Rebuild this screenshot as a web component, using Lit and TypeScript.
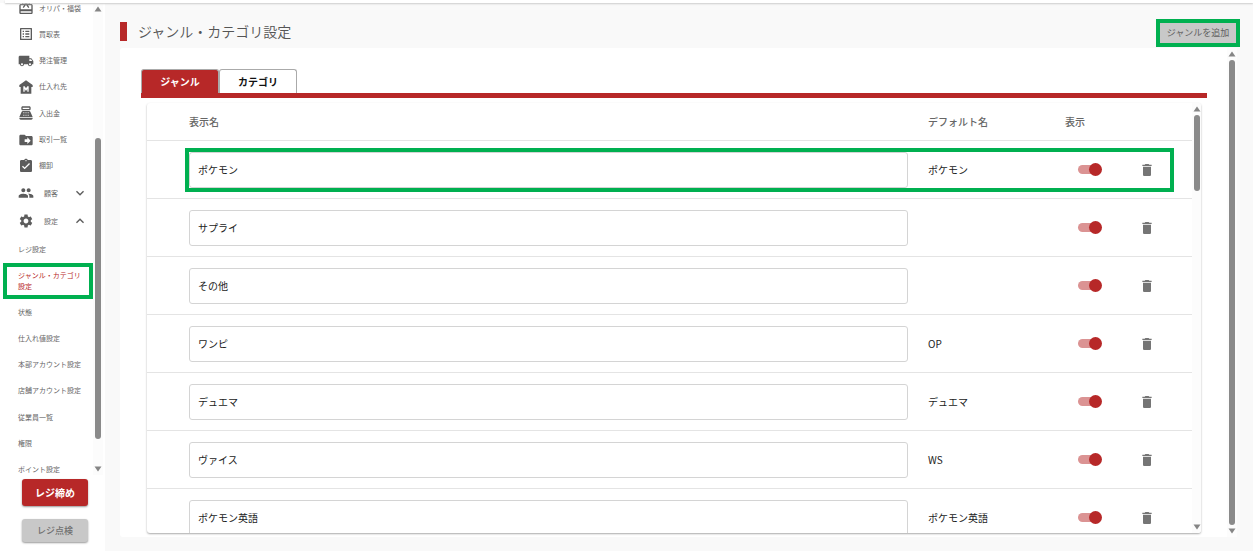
import { LitElement, html, css, svg, nothing } from "lit";
import { customElement, property, state } from "lit/decorators.js";
import { classMap } from "lit/directives/class-map.js";

const ICONS: Record<string, string> = {
  gift: "M20 6h-2.18c.11-.31.18-.65.18-1 0-1.66-1.34-3-3-3-1.05 0-1.96.54-2.5 1.35l-.5.67-.5-.68C10.96 2.54 10.05 2 9 2 7.34 2 6 3.34 6 5c0 .35.07.69.18 1H4c-1.11 0-1.99.89-1.99 2L2 19c0 1.11.89 2 2 2h16c1.11 0 2-.89 2-2V8c0-1.11-.89-2-2-2zm-5-2c.55 0 1 .45 1 1s-.45 1-1 1-1-.45-1-1 .45-1 1-1zM9 4c.55 0 1 .45 1 1s-.45 1-1 1-1-.45-1-1 .45-1 1-1zm11 15H4v-2h16v2zm0-5H4V8h5.08L7 10.83 8.62 12 11 8.76l1-1.36 1 1.36L15.38 12 17 10.83 14.92 8H20v6z",
  list: "M19 5v14H5V5h14m1.1-2H3.9c-.5 0-.9.4-.9.9v16.2c0 .4.4.9.9.9h16.2c.4 0 .9-.5.9-.9V3.9c0-.5-.5-.9-.9-.9zM11 7h6v2h-6V7zm0 4h6v2h-6v-2zm0 4h6v2h-6zM7 7h2v2H7zm0 4h2v2H7zm0 4h2v2H7z",
  truck: "M20 8h-3V4H3c-1.1 0-2 .9-2 2v11h2c0 1.66 1.34 3 3 3s3-1.34 3-3h6c0 1.66 1.34 3 3 3s3-1.34 3-3h2v-5l-3-4zM6 18.5c-.83 0-1.5-.67-1.5-1.5s.67-1.5 1.5-1.5 1.5.67 1.5 1.5-.67 1.5-1.5 1.5zm13.5-9l1.96 2.5H17V9.5h2.5zm-1.5 9c-.83 0-1.5-.67-1.5-1.5s.67-1.5 1.5-1.5 1.5.67 1.5 1.5-.67 1.5-1.5 1.5z",
  museum: "M12 2 2 9v3h2v10h16V12h2V9zM8 19v-8h2l2 3 2-3h2v8h-2v-4l-2 3-2-3v4z",
  register: "M17 2H7c-1.1 0-2 .9-2 2v2c0 1.1.9 2 2 2h10c1.1 0 2-.9 2-2V4c0-1.1-.9-2-2-2zm0 4H7V4h10v2zm3 16H4c-1.1 0-2-.9-2-2v-1h20v1c0 1.1-.9 2-2 2zM18.53 10.19C18.21 9.47 17.49 9 16.7 9H7.3c-.79 0-1.51.47-1.83 1.19L2 18h20l-3.47-7.81zM9.5 16H8v-1h1.5zm0-2H8v-1h1.5zm0-2H8v-1h1.5zm3.2 4h-1.4v-1h1.4zm0-2h-1.4v-1h1.4zm0-2h-1.4v-1h1.4zm3.3 4h-1.5v-1H16zm0-2h-1.5v-1H16zm0-2h-1.5v-1H16z",
  folder: "M20 6h-8l-2-2H4c-1.1 0-2 .9-2 2v12c0 1.1.9 2 2 2h16c1.1 0 2-.9 2-2V8c0-1.1-.9-2-2-2zm-6 12v-3h-4v-4h4V8l5 5-5 5z",
  check: "M19 3h-4.18C14.4 1.84 13.3 1 12 1c-1.3 0-2.4.84-2.82 2H5c-1.1 0-2 .9-2 2v14c0 1.1.9 2 2 2h14c1.1 0 2-.9 2-2V5c0-1.1-.9-2-2-2zm-7 0c.55 0 1 .45 1 1s-.45 1-1 1-1-.45-1-1 .45-1 1-1zm-2 14l-4-4 1.41-1.41L10 14.17l6.59-6.59L18 9l-8 8z",
  people: "M16 11c1.66 0 2.99-1.34 2.99-3S17.66 5 16 5c-1.66 0-3 1.34-3 3s1.34 3 3 3zm-8 0c1.66 0 2.99-1.34 2.99-3S9.66 5 8 5C6.34 5 5 6.34 5 8s1.34 3 3 3zm0 2c-2.33 0-7 1.17-7 3.5V19h14v-2.5c0-2.33-4.67-3.5-7-3.5zm8 0c-.29 0-.62.02-.97.05 1.16.84 1.97 1.97 1.97 3.45V19h6v-2.5c0-2.33-4.67-3.5-7-3.5z",
  gear: "M19.14 12.94c.04-.3.06-.61.06-.94 0-.32-.02-.64-.07-.94l2.03-1.58c.18-.14.23-.41.12-.61l-1.92-3.32c-.12-.22-.37-.29-.59-.22l-2.39.96c-.5-.38-1.03-.7-1.62-.94l-.36-2.54c-.04-.24-.24-.41-.48-.41h-3.84c-.24 0-.43.17-.47.41l-.36 2.54c-.59.24-1.13.57-1.62.94l-2.39-.96c-.22-.08-.47 0-.59.22L2.74 8.87c-.12.21-.08.47.12.61l2.03 1.58c-.05.3-.09.63-.09.94s.02.64.07.94l-2.03 1.58c-.18.14-.23.41-.12.61l1.92 3.32c.12.22.37.29.59.22l2.39-.96c.5.38 1.03.7 1.62.94l.36 2.54c.05.24.24.41.48.41h3.84c.24 0 .44-.17.47-.41l.36-2.54c.59-.24 1.13-.56 1.62-.94l2.39.96c.22.08.47 0 .59-.22l1.92-3.32c.12-.22.07-.47-.12-.61l-2.01-1.58zM12 15.6c-1.98 0-3.6-1.62-3.6-3.6s1.62-3.6 3.6-3.6 3.6 1.62 3.6 3.6-1.62 3.6-3.6 3.6z",
  down: "M16.59 8.59 12 13.17 7.41 8.59 6 10l6 6 6-6z",
  up: "m12 8-6 6 1.41 1.41L12 10.83l4.59 4.58L18 14z",
  trash: "M6 19c0 1.1.9 2 2 2h8c1.1 0 2-.9 2-2V7H6v12zM19 4h-3.5l-1-1h-5l-1 1H5v2h14V4z",
};

const icon = (name: string) =>
  html`<svg class="icon" viewBox="0 0 24 24" aria-hidden="true">${svg`<path fill-rule="evenodd" d=${ICONS[name]}></path>`}</svg>`;

/** Slim scroll bar: two arrows and a thumb placed by proportion. */
@customElement("scroll-bar")
class ScrollBar extends LitElement {
  @property({ type: Number }) before = 0;
  @property({ type: Number }) thumb = 1;
  @property({ type: Number }) after = 0;

  static styles = css`
    :host {
      display: flex;
      flex-direction: column;
      align-items: center;
      background: #fcfcfc;
    }
    svg {
      display: block;
      flex: none;
      width: 8px;
      height: 12px;
      fill: #858585;
    }
    .space {
      flex: 0 1 0px;
    }
    .thumb {
      flex: 1 1 0px;
      width: 6px;
      border-radius: 3px;
      background: #8a8a8a;
    }
  `;

  render() {
    return html`
      <svg viewBox="0 0 8 12"><path d="M4 3.5 7.5 8.5h-7z"></path></svg>
      <div class="space" style="flex-grow:${this.before}"></div>
      <div class="thumb" style="flex-grow:${this.thumb}"></div>
      <div class="space" style="flex-grow:${this.after}"></div>
      <svg viewBox="0 0 8 12"><path d="M4 8.5.5 3.5h7z"></path></svg>
    `;
  }
}

const MENU = [
  { icon: "gift", label: "オリパ・福袋" },
  { icon: "list", label: "買取表" },
  { icon: "truck", label: "発注管理" },
  { icon: "museum", label: "仕入れ先" },
  { icon: "register", label: "入出金" },
  { icon: "folder", label: "取引一覧" },
  { icon: "check", label: "棚卸" },
];

const SETTINGS = [
  "状態",
  "仕入れ値設定",
  "本部アカウント設定",
  "店舗アカウント設定",
  "従業員一覧",
  "権限",
  "ポイント設定",
];

const GENRES = [
  { name: "ポケモン", original: "ポケモン", marked: true },
  { name: "サプライ", original: "" },
  { name: "その他", original: "" },
  { name: "ワンピ", original: "OP" },
  { name: "デュエマ", original: "デュエマ" },
  { name: "ヴァイス", original: "WS" },
  { name: "ポケモン英語", original: "ポケモン英語" },
];

@customElement("app-root")
class AppRoot extends LitElement {
  @state() private tab = 0;

  static styles = css`
    :host {
      display: flex;
      flex-direction: column;
      height: 100vh;
      overflow: hidden;
      background: #f9f9f9;
      color: #222;
      font: 10px/16px "Noto Sans CJK JP", "Noto Sans", sans-serif;
    }
    * {
      box-sizing: border-box;
    }
    button,
    input {
      font: inherit;
      color: inherit;
    }
    button {
      border: 0;
      padding: 0;
      background: none;
      cursor: pointer;
    }
    a {
      color: inherit;
      text-decoration: none;
    }
    .icon {
      display: block;
      flex: none;
      width: 16px;
      height: 16px;
      fill: currentColor;
    }
    .topbar {
      flex: none;
      height: 3px;
      margin-left: 5px;
      background: #fff;
      box-shadow: 0 1px 2px #ccc;
      z-index: 1;
    }
    .body {
      flex: 1;
      display: flex;
      min-height: 0;
    }

    .sidebar {
      flex: none;
      display: flex;
      flex-direction: column;
      width: 105px;
      background: #fff;
      color: #666;
      font-size: 7px;
      line-height: 11px;
    }
    .sidebar .icon {
      fill: #5c5c5c;
    }
    .scroller {
      flex: 1;
      display: flex;
      min-height: 0;
    }
    .scroller scroll-bar {
      width: 10px;
    }
    nav {
      flex: none;
      width: 93px;
      overflow: hidden;
    }
    .group {
      display: flex;
      flex-direction: column;
      height: 184px;
    }
    .group.scrolled {
      margin-top: -8px;
    }
    .item {
      flex: 1;
      display: flex;
      align-items: center;
      padding-left: 18px;
    }
    .scrolled .item {
      gap: 5px;
    }
    .parent {
      display: flex;
      align-items: center;
      gap: 10px;
      width: 100%;
      height: 28px;
      padding: 0 5px 0 18px;
      text-align: left;
    }
    .parent span {
      flex: 1;
    }
    .single {
      height: 28px;
    }
    .current {
      position: relative;
      height: 36px;
      padding-right: 8px;
      color: #b72828;
    }
    .mark {
      position: absolute;
      border: 4px solid #00b050;
      pointer-events: none;
    }
    .current .mark {
      inset: 0 0 0 3px;
    }
    .actions {
      flex: none;
      display: flex;
      flex-direction: column;
      gap: 13px;
      padding: 4px 17px 9px 22px;
    }
    .filled {
      border-radius: 3px;
      background: #c8c8c8;
      box-shadow: 0 1px 2px #999;
      color: #707070;
      font-size: 9px;
      font-weight: 500;
      height: 23px;
    }
    .filled.primary {
      height: 27px;
      background: #b72828;
      color: #fff;
      font-size: 10px;
      font-weight: 700;
    }

    main {
      flex: 1;
      display: flex;
      flex-direction: column;
      min-width: 0;
      padding: 15px 16px 14px 15px;
    }
    .head {
      flex: none;
      display: flex;
      align-items: flex-start;
      height: 30px;
      margin-right: -3px;
    }
    .accent {
      width: 7px;
      height: 19px;
      margin: 4px 11px 0 0;
      background: #b72828;
    }
    h1 {
      flex: 1;
      margin: 3px 0 0;
      font-size: 14px;
      line-height: 20px;
      font-weight: 350;
      color: #555;
    }
    .add {
      width: 84px;
      height: 28px;
      margin-top: 1px;
      border: 4px solid #00b050;
      background: #c8c8c8;
      color: #606060;
      font-size: 9px;
      line-height: 18px;
      white-space: nowrap;
    }
    .panel {
      flex: 1;
      display: flex;
      min-height: 0;
      border-radius: 3px;
      background: #fff;
    }
    .panel > scroll-bar {
      width: 10px;
    }
    .content {
      flex: 1;
      display: flex;
      flex-direction: column;
      min-width: 0;
      padding: 21px 20px 4px 21px;
    }
    .tabs {
      flex: none;
      display: flex;
      border-bottom: 5px solid #b72828;
    }
    .tab {
      width: 78px;
      height: 24px;
      border: 1px solid #aaa;
      border-bottom: 0;
      border-radius: 3px 3px 0 0;
      color: #111;
      font-weight: 700;
    }
    .tab.on {
      background: #b72828;
      color: #fff;
    }
    .card {
      flex: 1;
      display: flex;
      min-height: 0;
      margin: 5px 6px 0;
      border-radius: 3px;
      overflow: hidden;
      box-shadow: 0 1px 2px #aaa;
    }
    .card scroll-bar {
      width: 9px;
    }
    .rows {
      flex: 1;
      min-width: 0;
      overflow: hidden;
    }
    table {
      width: 100%;
      table-layout: fixed;
      border-collapse: separate;
      border-spacing: 0;
    }
    .c-lead {
      width: 32px;
    }
    .c-default {
      width: 137px;
    }
    .c-show {
      width: 74px;
    }
    .c-delete {
      width: 63px;
    }
    th,
    td {
      padding: 0 10px;
      border-bottom: 1px solid #e4e4e4;
      text-align: left;
      font-weight: 400;
    }
    th {
      height: 38px;
      color: #666;
      font-weight: 500;
    }
    td {
      height: 58px;
    }
    tr {
      position: relative;
    }
    td .mark {
      top: 7px;
      right: 18px;
      left: 38px;
      height: 44px;
    }
    .name {
      display: block;
      width: 100%;
      height: 36px;
      padding: 0 8px;
      border: 1px solid #d4d4d4;
      border-radius: 3px;
      background: #fff;
      outline: 0;
    }
    .toggle {
      appearance: none;
      display: grid;
      align-items: center;
      width: 24px;
      height: 14px;
      margin: 0 0 0 13px;
      cursor: pointer;
    }
    .toggle::before,
    .toggle::after {
      content: "";
      grid-area: 1 / 1;
    }
    .toggle::before {
      width: 22px;
      height: 9px;
      border-radius: 5px;
      background: #ccc;
    }
    .toggle::after {
      width: 13px;
      height: 13px;
      border-radius: 50%;
      background: #eee;
    }
    .toggle:checked::before {
      background: #db9393;
    }
    .toggle:checked::after {
      justify-self: end;
      background: #b72828;
    }
    .delete {
      display: block;
      color: #757575;
    }
  `;

  render() {
    return html`
      <div class="topbar"></div>
      <div class="body">
        <aside class="sidebar">
          <div class="scroller">
            <nav>
              <div class="group scrolled">
                ${MENU.map((m) => html`<a class="item" href="#">${icon(m.icon)}<span>${m.label}</span></a>`)}
              </div>
              <button class="parent" aria-expanded="false">${icon("people")}<span>顧客</span>${icon("down")}</button>
              <button class="parent" aria-expanded="true">${icon("gear")}<span>設定</span>${icon("up")}</button>
              <a class="item single" href="#">レジ設定</a>
              <a class="item current" href="#" aria-current="page">ジャンル・カテゴリ設定<i class="mark"></i></a>
              <div class="group">
                ${SETTINGS.map((s) => html`<a class="item" href="#">${s}</a>`)}
              </div>
            </nav>
            <scroll-bar before="123" thumb="301" after="24"></scroll-bar>
          </div>
          <div class="actions">
            <button class="filled primary">レジ締め</button>
            <button class="filled">レジ点検</button>
          </div>
        </aside>
        <main>
          <header class="head">
            <span class="accent"></span>
            <h1>ジャンル・カテゴリ設定</h1>
            <button class="add">ジャンルを追加</button>
          </header>
          <section class="panel">
            <div class="content">
              <div class="tabs" role="tablist">
                ${["ジャンル", "カテゴリ"].map(
                  (t, i) => html`<button
                    role="tab"
                    class=${classMap({ tab: true, on: this.tab === i })}
                    aria-selected=${this.tab === i}
                    @click=${() => (this.tab = i)}
                  >${t}</button>`
                )}
              </div>
              <div class="card">
                <div class="rows">
                  <table>
                    <colgroup>
                      <col class="c-lead" /><col /><col class="c-default" /><col class="c-show" /><col class="c-delete" />
                    </colgroup>
                    <thead>
                      <tr><th></th><th>表示名</th><th>デフォルト名</th><th>表示</th><th></th></tr>
                    </thead>
                    <tbody>
                      ${GENRES.map(
                        (g) => html`<tr>
                          <td></td>
                          <td><input class="name" type="text" aria-label="表示名" .value=${g.name} /></td>
                          <td>${g.original}</td>
                          <td><input class="toggle" type="checkbox" role="switch" aria-label="表示" checked /></td>
                          <td>
                            <button class="delete" aria-label="削除">${icon("trash")}</button>
                            ${g.marked ? html`<i class="mark"></i>` : nothing}
                          </td>
                        </tr>`
                      )}
                    </tbody>
                  </table>
                </div>
                <scroll-bar before="0" thumb="76" after="330"></scroll-bar>
              </div>
            </div>
            <scroll-bar></scroll-bar>
          </section>
        </main>
      </div>
    `;
  }
}
